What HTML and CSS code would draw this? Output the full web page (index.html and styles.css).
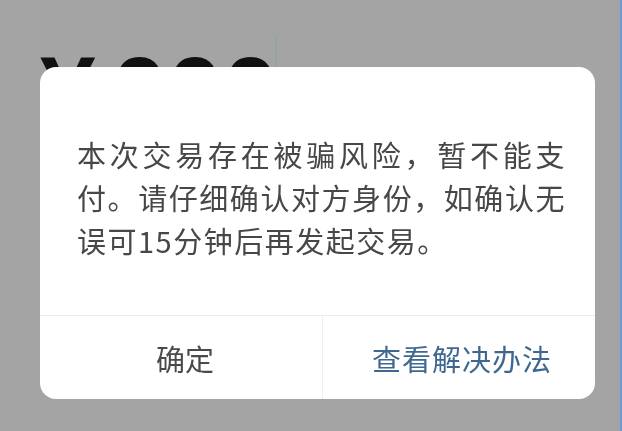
FILE: index.html
```html
<!DOCTYPE html>
<html lang="zh-CN">
<head>
<meta charset="utf-8">
<title>支付提示</title>
<link rel="stylesheet" href="styles.css">
</head>
<body>
<div class="screen">
  <div class="amount">
    <span class="yen">¥</span><span class="digits">000</span><span class="caret"></span>
  </div>
</div>
<div class="mask">
  <div class="dialog">
    <p class="message"><span class="line">本次交易存在被骗风险，暂不能支</span><span class="line">付。请仔细确认对方身份，如确认无</span><span class="line last">误可15分钟后再发起交易。</span></p>
    <div class="actions">
      <button class="btn btn-ok">确定</button>
      <button class="btn btn-help">查看解决办法</button>
    </div>
  </div>
</div>
</body>
</html>
```

FILE: styles.css
```css
html, body {
  margin: 0;
  padding: 0;
  height: 100%;
}
body {
  background: #a4a4a4;
  font-family: "Noto Sans CJK SC", "Noto Sans", sans-serif;
  overflow: hidden;
}
.screen {
  height: 100vh;
  box-sizing: border-box;
  border-right: 2px solid #6d9bd8;
}
.amount {
  display: flex;
  align-items: flex-start;
  padding: 42px 0 0 40px;
  font-family: "Liberation Sans", Arial, sans-serif;
  font-weight: bold;
  font-size: 100px;
  line-height: 100px;
  color: #111;
}
.yen {
  margin-right: 16px;
}
.caret {
  width: 2px;
  height: 32px;
  margin-top: -7px;
  margin-left: -3px;
  background: #8fa7a7;
}
.mask {
  position: fixed;
  inset: 0;
  padding: 67px 0 0 40px;
}
.dialog {
  width: 555px;
  height: 332px;
  background: #fff;
  border-radius: 16px;
  display: flex;
  flex-direction: column;
  overflow: hidden;
}
.message {
  margin: 0;
  flex: 1;
  width: 489px;
  padding: 66px 0 0 37px;
  font-size: 29px;
  line-height: 43px;
  letter-spacing: 1.5px;
  white-space: nowrap;
  color: #474747;
}
.line {
  display: block;
  white-space: normal;
  text-align: justify;
  text-align-last: justify;
}
.line.last {
  text-align-last: left;
}
.actions {
  display: flex;
  height: 83px;
  border-top: 1px solid #ececec;
}
.btn {
  flex: none;
  border: 0;
  background: transparent;
  padding: 0;
  font-family: "Noto Sans CJK SC", sans-serif;
  font-size: 29px;
  cursor: pointer;
}
.btn-ok {
  width: 283px;
  padding-left: 8px;
  color: #4a4a4a;
  border-right: 1px solid #efefef;
}
.btn-help {
  flex: 1;
  padding-left: 6px;
  letter-spacing: 1px;
  color: #3f6890;
}
```
